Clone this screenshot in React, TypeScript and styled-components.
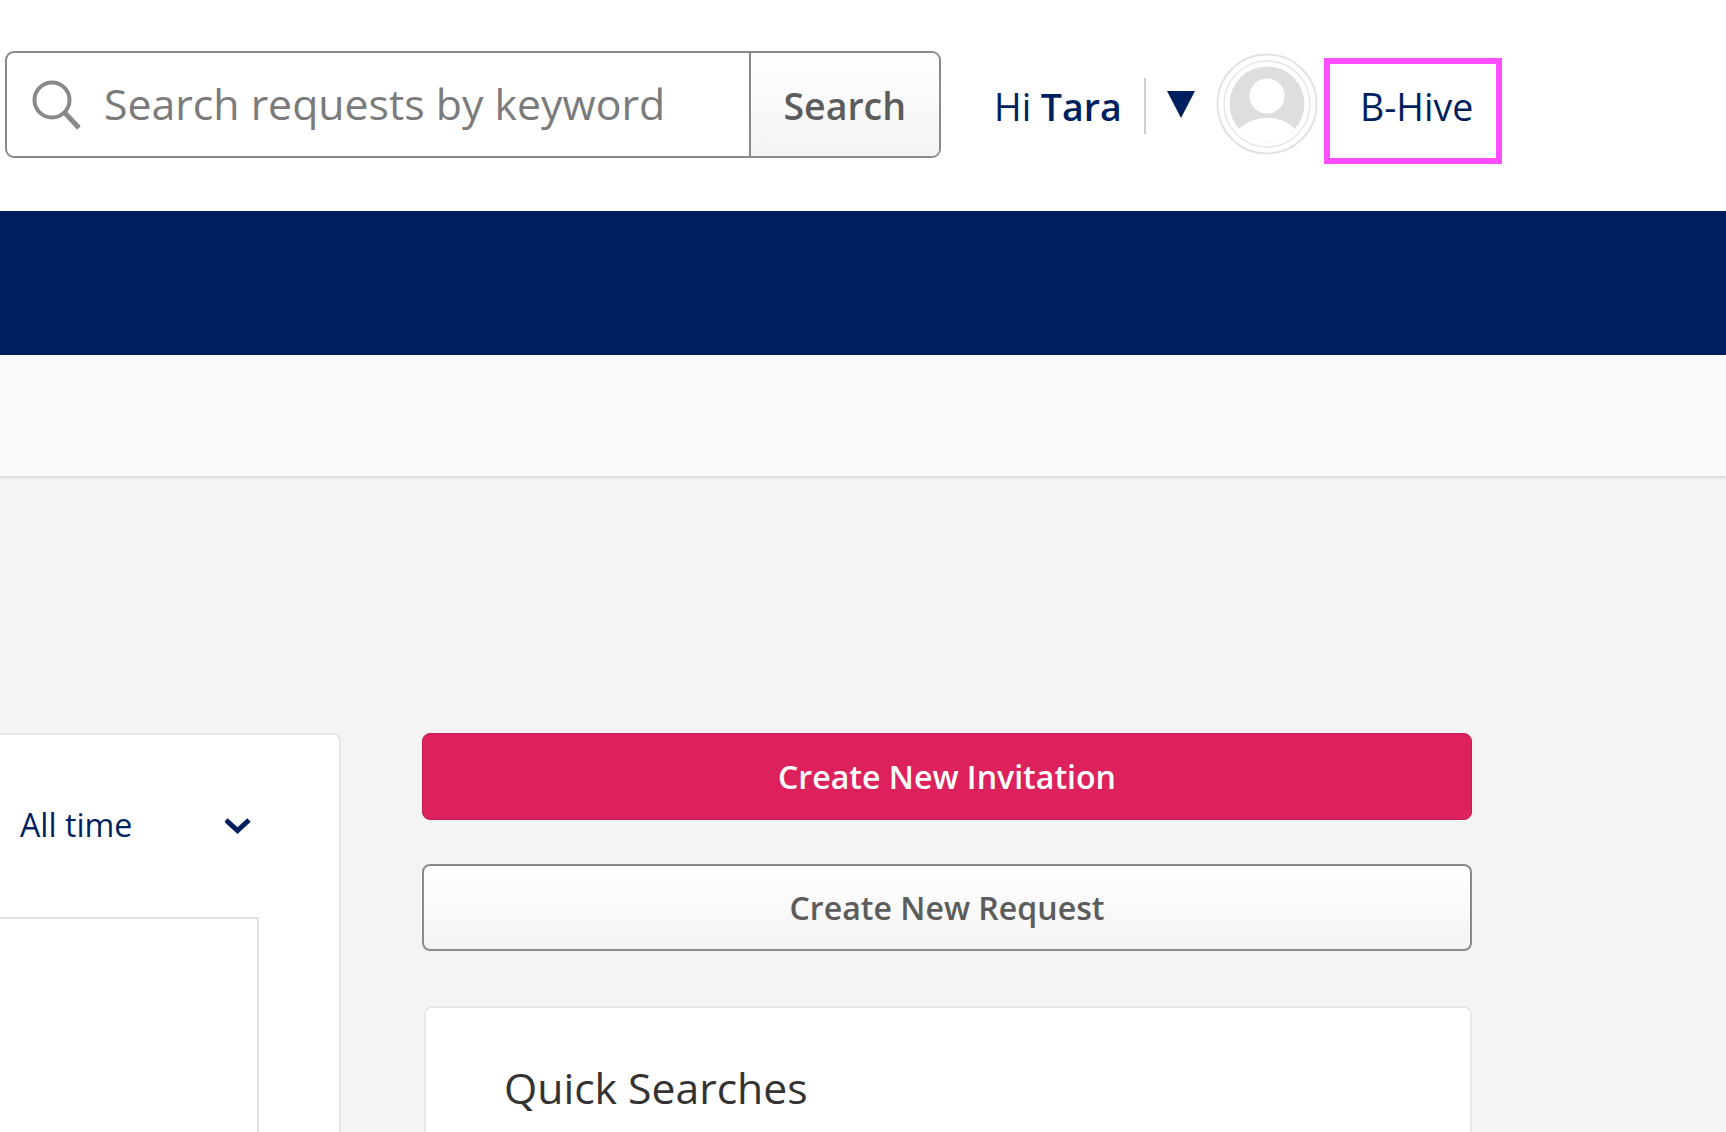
import React from "react";
import styled, { createGlobalStyle } from "styled-components";

const Global = createGlobalStyle`
  html, body { margin: 0; padding: 0; background: #f4f4f4; }
  body { font-family: "Open Sans", "Liberation Sans", sans-serif; }
  * { box-sizing: border-box; }
`;

const Page = styled.div`
  width: 1726px;
  height: 1132px;
  overflow: hidden;
  display: flex;
  flex-direction: column;
`;

const Header = styled.header`
  height: 211px;
  flex: none;
  background: #fff;
  display: flex;
  align-items: flex-start;
  padding: 51px 0 0 5px;
`;

const SearchBox = styled.form`
  width: 935.5px;
  height: 107px;
  flex: none;
  display: flex;
  border: 2.5px solid #8a8a8a;
  border-radius: 9px;
  overflow: hidden;
  background: #fff;
`;

const SearchField = styled.div`
  width: 744px;
  flex: none;
  display: flex;
  align-items: center;
  padding-left: 25px;
  gap: 22px;
  border-right: 2.5px solid #8a8a8a;
`;

const Placeholder = styled.span`
  font-size: 42.8px;
  color: #7b7b7b;
  white-space: nowrap;
  margin-top: -2px;
`;

const SearchButton = styled.button`
  flex: 1;
  border: 0;
  padding: 2px 0 0;
  font: 600 37.5px "Open Sans", sans-serif;
  color: #5c5c5c;
  background: linear-gradient(#ffffff, #f4f4f4);
`;

const UserArea = styled.div`
  display: flex;
  align-items: flex-start;
  margin-left: 53.5px;
  height: 112px;
`;

const Greeting = styled.div`
  width: 150px;
  margin-top: 32px;
  font-size: 37.5px;
  line-height: 48px;
  color: #001f5f;
  white-space: nowrap;
  b { font-weight: 600; }
`;

const Separator = styled.div`
  width: 2px;
  height: 56px;
  margin-top: 27px;
  background: #d0d0d0;
`;

const Caret = styled.svg`
  width: 28px;
  height: 27px;
  margin: 40px 21px 0 21px;
  flex: none;
`;

const Avatar = styled.svg`
  width: 102px;
  height: 102px;
  margin-top: 2px;
  flex: none;
`;

const Tagged = styled.div`
  width: 178px;
  height: 106px;
  margin: 7px 0 0 6px;
  flex: none;
  border: 6px solid #ff4dff;
  padding: 19px 0 0 30px;
  font-size: 37.5px;
  line-height: 48px;
  color: #001f5f;
`;

const NavBar = styled.nav`
  height: 144px;
  flex: none;
  background: #001f5f;
`;

const SubBar = styled.div`
  height: 121px;
  flex: none;
  background: #fafafa;
  box-shadow: 0 1px 4px rgba(0, 0, 0, 0.18);
`;

const Main = styled.main`
  flex: 1;
  min-height: 0;
  display: grid;
  grid-template-columns: 341px 1050px;
  column-gap: 81px;
  padding-top: 257px;
`;

const LeftCard = styled.section`
  background: #fff;
  border-top: 2px solid #e6e6e6;
  border-right: 2px solid #e6e6e6;
  border-top-right-radius: 8px;
  display: flex;
  flex-direction: column;
  padding: 0 80px 0 0;
  height: 500px;
`;

const RangeRow = styled.div`
  height: 182px;
  flex: none;
  display: flex;
  align-items: flex-start;
  justify-content: space-between;
  padding: 68px 0 0 20px;
`;

const RangeLabel = styled.span`
  font-size: 32.2px;
  line-height: 44px;
  color: #001f5f;
`;

const Chevron = styled.svg`
  width: 27px;
  height: 17px;
  margin: 14px 7px 0 0;
`;

const InnerPanel = styled.div`
  flex: 1;
  border-top: 2.5px solid #e2e2e2;
  border-right: 2.5px solid #e2e2e2;
`;

const RightColumn = styled.section`
  display: flex;
  flex-direction: column;
`;

const ActionButton = styled.button<{ $primary?: boolean }>`
  width: 100%;
  height: 87px;
  flex: none;
  border-radius: 8px;
  padding: 0;
  font: 600 32.1px "Open Sans", sans-serif;
  color: ${(p) => (p.$primary ? "#fff" : "#5c5c5c")};
  border: ${(p) => (p.$primary ? "1px solid #c41f52" : "2.5px solid #8a8a8a")};
  background: ${(p) => (p.$primary ? "#dc215c" : "linear-gradient(#ffffff, #f4f4f4)")};
  margin-bottom: ${(p) => (p.$primary ? "44px" : "55px")};
`;

const QuickCard = styled.section`
  margin: 0 0 0 2px;
  height: 300px;
  background: #fff;
  border: 2px solid #e8e8e8;
  border-bottom: 0;
  border-radius: 8px 8px 0 0;
  padding: 51px 0 0 78px;
`;

const QuickTitle = styled.h2`
  margin: 0;
  font-size: 42.7px;
  line-height: 58px;
  font-weight: 400;
  color: #333;
`;

export default function App() {
  return (
    <Page>
      <Global />
      <Header>
        <SearchBox onSubmit={(e) => e.preventDefault()}>
          <SearchField>
            <svg width="50" height="50" viewBox="0 0 50 50" fill="none" stroke="#8a8a8a" strokeWidth="4">
              <circle cx="20" cy="20" r="17.5" />
              <path d="M33 33 L47 48" strokeWidth="5" />
            </svg>
            <Placeholder>Search requests by keyword</Placeholder>
          </SearchField>
          <SearchButton type="button">Search</SearchButton>
        </SearchBox>
        <UserArea>
          <Greeting>
            Hi <b>Tara</b>
          </Greeting>
          <Separator />
          <Caret viewBox="0 0 28 27">
            <path d="M0 0 H28 L14 27 Z" fill="#001f5f" />
          </Caret>
          <Avatar viewBox="0 0 102 102">
            <defs>
              <clipPath id="avatar-face">
                <circle cx="51" cy="51" r="37.5" />
              </clipPath>
            </defs>
            <circle cx="51" cy="51" r="49.5" fill="none" stroke="#e2e2e2" strokeWidth="2" />
            <circle cx="51" cy="51" r="43" fill="none" stroke="#e6e6e6" strokeWidth="1.5" />
            <circle cx="51" cy="51" r="37.5" fill="#dedede" />
            <g clipPath="url(#avatar-face)" fill="#fff">
              <circle cx="51" cy="43" r="17.5" />
              <ellipse cx="51" cy="92" rx="35" ry="27" />
            </g>
          </Avatar>
          <Tagged>B-Hive</Tagged>
        </UserArea>
      </Header>
      <NavBar />
      <SubBar />
      <Main>
        <LeftCard>
          <RangeRow>
            <RangeLabel>All time</RangeLabel>
            <Chevron viewBox="0 0 27 17" fill="none" stroke="#001f5f" strokeWidth="5">
              <path d="M1 3 L12.5 13.5 L24 3" />
            </Chevron>
          </RangeRow>
          <InnerPanel />
        </LeftCard>
        <RightColumn>
          <ActionButton $primary>Create New Invitation</ActionButton>
          <ActionButton>Create New Request</ActionButton>
          <QuickCard>
            <QuickTitle>Quick Searches</QuickTitle>
          </QuickCard>
        </RightColumn>
      </Main>
    </Page>
  );
}
